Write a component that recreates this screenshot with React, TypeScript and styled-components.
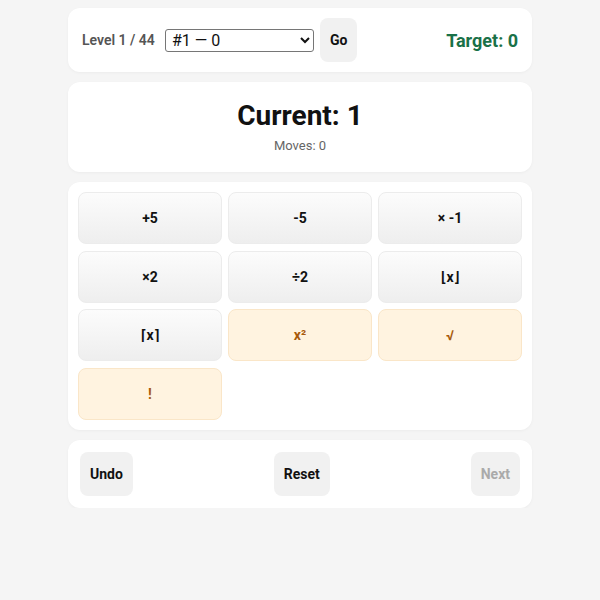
import { useState } from "react";
import styled, { createGlobalStyle } from "styled-components";

const GlobalStyle = createGlobalStyle`
  html, body {
    margin: 0;
    padding: 0;
    background: #f5f5f5;
    font-family: Roboto, "Noto Sans", Arial, sans-serif;
    color: #111;
  }
`;

type Op = { label: string; special?: boolean };

const OPS: Op[] = [
  { label: "+5" },
  { label: "-5" },
  { label: "× -1" },
  { label: "×2" },
  { label: "÷2" },
  { label: "⌊x⌋" },
  { label: "⌈x⌉" },
  { label: "x²", special: true },
  { label: "√", special: true },
  { label: "!", special: true },
];

export default function App() {
  const [level, setLevel] = useState("1");
  const [current] = useState(1);
  const [moves] = useState(0);

  return (
    <>
      <GlobalStyle />
      <Page>
        <Card>
          <Header>
            <LevelLabel>Level 1 / 44</LevelLabel>
            <LevelSelect value={level} onChange={(e) => setLevel(e.target.value)}>
              <option value='1'>#1 — 0</option>
              <option value='2'>#2 — 7</option>
              <option value='3'>#3 — 12</option>
            </LevelSelect>
            <SoftButton>Go</SoftButton>
            <Target>Target: 0</Target>
          </Header>
        </Card>

        <Card>
          <Status>
            <Current>Current: {current}</Current>
            <Moves>Moves: {moves}</Moves>
          </Status>
        </Card>

        <Card>
          <OpGrid>
            {OPS.map((op) => (
              <OpButton key={op.label} $special={op.special}>
                {op.label}
              </OpButton>
            ))}
          </OpGrid>
        </Card>

        <Card>
          <Controls>
            <SoftButton>Undo</SoftButton>
            <SoftButton>Reset</SoftButton>
            <SoftButton disabled>Next</SoftButton>
          </Controls>
        </Card>
      </Page>
    </>
  );
}

const Page = styled.main`
  width: 464px;
  margin: 0 auto;
  padding-top: 8px;
  display: flex;
  flex-direction: column;
  gap: 10px;
`;

const Card = styled.section`
  background: #fff;
  border-radius: 12px;
  box-shadow: 0 1px 3px rgba(0, 0, 0, 0.04);
`;

const Header = styled.div`
  display: flex;
  align-items: center;
  padding: 10px 14px;
`;

const LevelLabel = styled.span`
  font-size: 14px;
  font-weight: 600;
  color: #555;
  margin-right: 10px;
`;

const LevelSelect = styled.select`
  width: 149px;
  height: 23px;
  font-family: Roboto, "Noto Sans", Arial, sans-serif;
  font-size: 16px;
  color: #111;
  border: 1px solid #767676;
  border-radius: 3px;
  background: #fff;
  padding: 0 2px;
  margin-right: 6px;
`;

const SoftButton = styled.button`
  height: 44px;
  padding: 0 10px;
  border: none;
  border-radius: 8px;
  background: #f1f1f1;
  font-family: Roboto, "Noto Sans", Arial, sans-serif;
  font-size: 14px;
  font-weight: 700;
  color: #111;
  cursor: pointer;

  &:disabled {
    color: #aaa;
    cursor: default;
  }
`;

const Target = styled.span`
  margin-left: auto;
  font-size: 18px;
  font-weight: 700;
  color: #1a7148;
`;

const Status = styled.div`
  height: 90px;
  display: flex;
  flex-direction: column;
  align-items: center;
  justify-content: center;
  gap: 7px;
`;

const Current = styled.div`
  font-size: 28px;
  font-weight: 700;
  color: #111;
  line-height: 1.1;
`;

const Moves = styled.div`
  font-size: 13px;
  color: #666;
`;

const OpGrid = styled.div`
  display: grid;
  grid-template-columns: repeat(3, 1fr);
  column-gap: 6px;
  row-gap: 6.5px;
  padding: 10px;
`;

const OpButton = styled.button<{ $special?: boolean }>`
  height: 52px;
  border-radius: 8px;
  border: 1px solid ${({ $special }) => ($special ? "#fae6c8" : "#ececec")};
  background: ${({ $special }) => ($special ? "#fff3e0" : "linear-gradient(#fcfcfc, #eeeeee)")};
  color: ${({ $special }) => ($special ? "#a85a0c" : "#111")};
  font-family: Roboto, "Noto Sans", Arial, sans-serif;
  font-size: 14px;
  font-weight: 700;
  cursor: pointer;
`;

const Controls = styled.div`
  display: flex;
  justify-content: space-between;
  align-items: center;
  padding: 12px;
`;
